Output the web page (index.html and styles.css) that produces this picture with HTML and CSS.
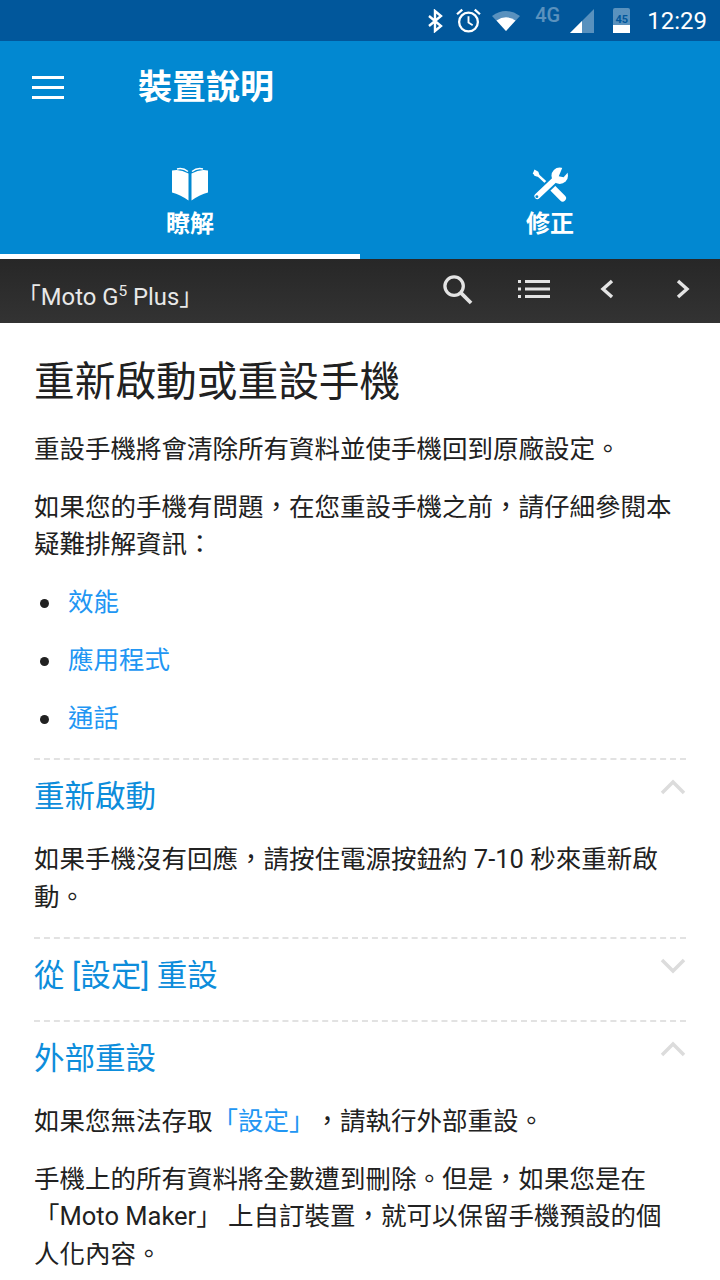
FILE: index.html
```html
<!DOCTYPE html>
<html lang="zh-TW">
<head>
    <meta charset="UTF-8">
    <meta name="viewport" content="width=device-width, initial-scale=1.0">
    <title>裝置說明</title>
    <link rel="stylesheet" href="styles.css">
</head>
<body>
    <div class="status-bar">
        <svg class="st-bt" viewBox="0 0 16 24"><path d="M2 7l12 10-6 5V2l6 5L2 17" fill="none" stroke="#fff" stroke-width="2.4"/></svg>
        <svg class="st-alarm" viewBox="0 0 24 24"><circle cx="12" cy="13.5" r="9" fill="none" stroke="#fff" stroke-width="2.2"/><path d="M12 8v6l4 2.5" fill="none" stroke="#fff" stroke-width="1.8"/><path d="M1 6l5-4.5M23 6l-5-4.5" stroke="#fff" stroke-width="2.2"/></svg>
        <svg class="st-wifi" viewBox="0 0 30 22"><path d="M1 6Q15-4 29 6L15 21z" fill="#fff" opacity=".35"/><path d="M5.5 10.5Q15 4 24.500 10.500L15 21z" fill="#fff"/></svg>
        <span class="st-4g">4G</span>
        <svg class="st-signal" viewBox="0 0 24 24"><path d="M0 24L24 0v24z" fill="#fff" opacity=".35"/><path d="M0 24l12-12v12z" fill="#fff"/></svg>
        <div class="st-battery"><span>45</span></div>
        <span class="st-time">12:29</span>
    </div>

    <header class="app-bar">
        <div class="title-row">
            <div class="menu-icon"><i></i><i></i><i></i></div>
            <h1>裝置說明</h1>
        </div>
        <nav class="tabs">
            <div class="tab active">
                <svg viewBox="0 0 38 34"><path d="M1 3Q9 1 17.500 6v27Q9 27 1 25z" fill="#fff"/><path d="M37 3Q29 1 20.500 6v27Q29 27 37 25z" fill="#fff"/><path d="M6 1.500Q12 0 17 4M32 1.500Q26 0 21 4" fill="none" stroke="#fff" stroke-width="1.500"/></svg>
                <span>瞭解</span>
            </div>
            <div class="tab">
                <svg viewBox="0 0 38 36">
                    <path d="M3 5L17 18" stroke="#fff" stroke-width="2.500"/>
                    <path d="M1.500 6.500L3 2.500l4 2.500 1 3-2 2-3-1z" fill="#fff"/>
                    <path d="M20 20l12 12" stroke="#fff" stroke-width="7" stroke-linecap="round"/>
                    <path d="M6 30L24 13" stroke="#0288d1" stroke-width="10"/>
                    <path d="M6 30L24 13" stroke="#fff" stroke-width="6" stroke-linecap="round"/>
                    <circle cx="29" cy="9" r="8.500" fill="#fff"/>
                    <path d="M28 9.500l4-9.500h6v5l-5 5.500z" fill="#0288d1"/>
                    <circle cx="5.500" cy="30.500" r="1.500" fill="#0288d1"/>
                </svg>
                <span>修正</span>
            </div>
        </nav>
    </header>

    <div class="tool-bar">
        <div class="doc-name">「Moto G<sup>5</sup> Plus」</div>
        <div class="tool-icons">
            <svg class="ic-search" viewBox="0 0 32 32"><circle cx="12.500" cy="12.500" r="9.500" fill="none" stroke="#e4e4e4" stroke-width="3.400"/><path d="M19.500 19.500L30 30" stroke="#e4e4e4" stroke-width="3.800"/></svg>
            <svg class="ic-list" viewBox="0 0 32 18"><path d="M0 1.500h3M7 1.500h25M0 9h3M7 9h25M0 16.500h3M7 16.500h25" stroke="#e4e4e4" stroke-width="3"/></svg>
            <svg class="ic-chev" viewBox="0 0 14 20"><path d="M12 2L3 10l9 8" fill="none" stroke="#e4e4e4" stroke-width="3.400"/></svg>
            <svg class="ic-chev" viewBox="0 0 14 20"><path d="M2 2l9 8-9 8" fill="none" stroke="#e4e4e4" stroke-width="3.400"/></svg>
        </div>
    </div>

    <main class="content">
        <h2>重新啟動或重設手機</h2>
        <p>重設手機將會清除所有資料並使手機回到原廠設定。</p>
        <p>如果您的手機有問題，在您重設手機之前，請仔細參閱本疑難排解資訊：</p>
        <ul>
            <li><a>效能</a></li>
            <li><a>應用程式</a></li>
            <li><a>通話</a></li>
        </ul>

        <section class="fold">
            <div class="fold-head">
                <h3>重新啟動</h3>
                <svg class="chev" viewBox="0 0 26 16"><path d="M2 14L13 3l11 11" fill="none" stroke="#dcdcdc" stroke-width="3.500"/></svg>
            </div>
            <p>如果手機沒有回應，請按住電源按鈕約 7-10 秒來重新啟動。</p>
        </section>

        <section class="fold">
            <div class="fold-head">
                <h3>從 [設定] 重設</h3>
                <svg class="chev" viewBox="0 0 26 16"><path d="M2 2l11 11L24 2" fill="none" stroke="#dcdcdc" stroke-width="3.500"/></svg>
            </div>
        </section>

        <section class="fold">
            <div class="fold-head">
                <h3>外部重設</h3>
                <svg class="chev" viewBox="0 0 26 16"><path d="M2 14L13 3l11 11" fill="none" stroke="#dcdcdc" stroke-width="3.500"/></svg>
            </div>
            <p>如果您無法存取<a>「設定」</a>，請執行外部重設。</p>
            <p>手機上的所有資料將全數遭到刪除。但是，如果您是在「Moto Maker」 上自訂裝置，就可以保留手機預設的個人化內容。</p>
        </section>
    </main>
</body>
</html>
```

FILE: styles.css
```css
html, body {
    margin: 0;
    padding: 0;
    height: 1280px;
    overflow: hidden;
}
body {
    font-family: Roboto, 'Noto Sans CJK TC', sans-serif;
    background: white;
    color: #212121;
}
.status-bar {
    height: 41px;
    background: #01579b;
    display: flex;
    align-items: center;
    justify-content: flex-end;
    padding-right: 13px;
    color: white;
}
.st-bt {
    width: 16px;
    height: 24px;
    margin-right: 13px;
}
.st-alarm {
    width: 25px;
    height: 25px;
    margin-right: 10px;
}
.st-wifi {
    width: 30px;
    height: 22px;
    margin-right: 14px;
}
.st-4g {
    font-size: 20px;
    font-weight: 500;
    opacity: 0.35;
    margin: -12px 2px 0 0;
    width: 33px;
}
.st-signal {
    width: 24px;
    height: 24px;
    margin: 0 19px 0 0;
}
.st-battery {
    width: 17px;
    height: 25px;
    background: linear-gradient(rgba(255,255,255,0.35) 66%, white 66%);
    border-radius: 2px 2px 0 0;
    margin-right: 17px;
    font-size: 11px;
    font-weight: 700;
    text-align: center;
    line-height: 24px;
    color: #01579b;
}
.st-time {
    font-size: 24px;
}
.app-bar {
    height: 218px;
    background: #0288d1;
    color: white;
}
.title-row {
    height: 93px;
    display: flex;
    align-items: center;
    padding-left: 32px;
}
.menu-icon {
    width: 32px;
    display: flex;
    flex-direction: column;
    gap: 7px;
    margin-right: 74px;
}
.menu-icon i {
    height: 3px;
    background: white;
}
.title-row h1 {
    margin: -6px 0 0;
    font-size: 34px;
    font-weight: 700;
}
.tabs {
    display: flex;
    height: 125px;
}
.tab {
    flex: 1;
    height: 120px;
    display: flex;
    flex-direction: column;
    align-items: center;
    padding: 33px 0 0 20px;
    box-sizing: border-box;
    font-size: 24px;
    font-weight: 700;
    line-height: 30px;
}
.tab.active {
    height: 125px;
    border-bottom: 5px solid white;
}
.tab svg {
    width: 38px;
    height: 35px;
    margin-bottom: 7px;
}
.tool-bar {
    height: 64px;
    background: linear-gradient(#272727, #333);
    display: flex;
    align-items: center;
    justify-content: space-between;
    color: #e8e8e8;
}
.doc-name {
    font-size: 23.800px;
    padding-left: 17px;
    line-height: 28px;
    margin-top: 12px;
}
.doc-name sup {
    font-size: 15.500px;
    line-height: 0;
}
.tool-icons {
    display: flex;
    align-items: center;
    margin-top: -4px;
}
.ic-search {
    width: 31px;
    height: 31px;
    margin-right: 45px;
}
.ic-list {
    width: 32px;
    height: 18px;
    margin-right: 50px;
}
.ic-chev {
    width: 14px;
    height: 20px;
    margin-right: 62px;
}
.ic-chev:last-child {
    margin-right: 30px;
}
.content {
    padding: 0 34px;
    font-size: 25.500px;
    line-height: 37.400px;
    text-spacing-trim: space-all;
}
.content h2 {
    margin: 0;
    padding-top: 35px;
    padding-bottom: 25px;
    font-size: 40.700px;
    font-weight: 400;
    line-height: 48px;
}
.content p {
    margin: 0 0 20.600px;
}
.content a {
    color: #2196f3;
}
.content ul {
    margin: 0;
    padding: 0;
    list-style: none;
}
.content li {
    display: flex;
    align-items: center;
    margin-bottom: 20.600px;
}
.content li::before {
    content: "";
    width: 9px;
    height: 9px;
    border-radius: 50%;
    background: #212121;
    margin: 1px 19px 0 6px;
}
.fold {
    border-top: 2px dashed #e2e2e2;
}
.fold-head {
    display: flex;
    justify-content: space-between;
    align-items: flex-start;
    height: 81px;
}
.fold-head h3 {
    margin: 0;
    font-size: 30.500px;
    font-weight: 400;
    line-height: 74px;
    color: #0d8ddb;
}
.chev {
    width: 26px;
    height: 16px;
    margin-top: 19px;
}
```
